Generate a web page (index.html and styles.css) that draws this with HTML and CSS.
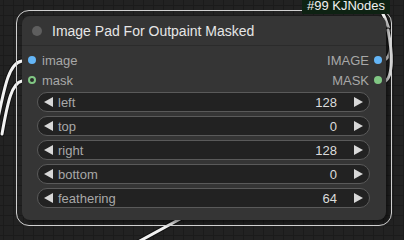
FILE: index.html
```html
<!DOCTYPE html>
<html lang="en">
<head>
    <meta charset="UTF-8">
    <title>Image Pad For Outpaint Masked</title>
    <link rel="stylesheet" href="styles.css">
</head>
<body>
    <div class="canvas">
        <!-- links drawn behind the node -->
        <svg class="links" width="404" height="240" viewBox="0 0 404 240">
            <g fill="none" stroke-linecap="round">
                <path class="link-shadow" d="M22 61 C 8 63, 4 90, -4 128"/>
                <path class="link" d="M22 61 C 8 63, 4 90, -4 128"/>
                <path class="link-shadow" d="M22 81 C 12 83, 8 100, 2 134"/>
                <path class="link" d="M22 81 C 12 83, 8 100, 2 134"/>
                <path class="link-shadow" d="M384 60 C 394 56, 392 30, 382 12"/>
                <path class="link" d="M384 60 C 394 56, 392 30, 382 12"/>
                <path class="link-shadow" d="M384 82 C 394 78, 392 50, 388 30"/>
                <path class="link" d="M384 82 C 394 78, 392 50, 388 30"/>
                <path class="link-shadow" d="M138 242 L 180 219"/>
                <path class="link" d="M138 242 L 180 219"/>
            </g>
        </svg>

        <div class="node selected">
            <div class="node-title">
                <span class="title-dot"></span>
                <span class="title-text">Image Pad For Outpaint Masked</span>
            </div>

            <div class="slots">
                <div class="slot-row">
                    <div class="slot in"><span class="dot dot-image"></span>image</div>
                    <div class="slot out">IMAGE<span class="dot dot-image"></span></div>
                </div>
                <div class="slot-row">
                    <div class="slot in"><span class="dot dot-mask-ring"></span>mask</div>
                    <div class="slot out">MASK<span class="dot dot-mask"></span></div>
                </div>
            </div>

            <div class="widgets">
                <div class="widget">
                    <span class="arrow left"></span>
                    <span class="w-label">left</span>
                    <span class="w-value">128</span>
                    <span class="arrow right"></span>
                </div>
                <div class="widget">
                    <span class="arrow left"></span>
                    <span class="w-label">top</span>
                    <span class="w-value">0</span>
                    <span class="arrow right"></span>
                </div>
                <div class="widget">
                    <span class="arrow left"></span>
                    <span class="w-label">right</span>
                    <span class="w-value">128</span>
                    <span class="arrow right"></span>
                </div>
                <div class="widget">
                    <span class="arrow left"></span>
                    <span class="w-label">bottom</span>
                    <span class="w-value">0</span>
                    <span class="arrow right"></span>
                </div>
                <div class="widget">
                    <span class="arrow left"></span>
                    <span class="w-label">feathering</span>
                    <span class="w-value">64</span>
                    <span class="arrow right"></span>
                </div>
            </div>
        </div>

        <div class="badge">#99 KJNodes</div>
    </div>
</body>
</html>
```

FILE: styles.css
```css
body {
    margin: 0;
    background-color: #222;
    font-family: "Liberation Sans", Arial, sans-serif;
    overflow: hidden;
}

.canvas {
    position: relative;
    width: 404px;
    height: 240px;
    background-color: #222;
    background-image:
        linear-gradient(to right, #1b1b1b 1px, transparent 1px),
        linear-gradient(to bottom, #1b1b1b 1px, transparent 1px);
    background-size: 10px 10px;
    background-position: 3px 5px;
}

.links {
    position: absolute;
    left: 0;
    top: 0;
}

.link-shadow {
    stroke: #111;
    stroke-width: 5;
}

.link {
    stroke: #f2f2f2;
    stroke-width: 3;
}

/* node sits on the free canvas */
.node {
    position: absolute;
    left: 22px;
    top: 16px;
    width: 364px;
    height: 204px;
    background: #353535;
    border-radius: 8px;
    box-shadow: 3px 3px 4px rgba(0, 0, 0, 0.45);
    box-sizing: border-box;
}

.node.selected::before {
    content: "";
    position: absolute;
    left: -6px;
    top: -6px;
    right: -6px;
    bottom: -6px;
    border: 1px solid #d0d0d0;
    border-radius: 13px;
    pointer-events: none;
}

.node-title {
    display: flex;
    align-items: center;
    height: 30px;
    padding-left: 10px;
    border-bottom: 1px solid #2b2b2b;
    box-sizing: border-box;
}

.title-dot {
    width: 10px;
    height: 10px;
    border-radius: 50%;
    background: #5e5e5e;
    margin-right: 10px;
}

.title-text {
    color: #e6e6e6;
    font-size: 14px;
}

.slots {
    padding-top: 4px;
}

.slot-row {
    display: flex;
    justify-content: space-between;
    align-items: center;
    height: 20px;
}

.slot {
    display: flex;
    align-items: center;
    color: #a8a8a8;
    font-size: 13px;
}

.slot.in {
    padding-left: 6px;
}

.slot.in .dot {
    margin-right: 6px;
}

.slot.out {
    padding-right: 4px;
}

.slot.out .dot {
    margin-left: 5px;
}

.dot {
    width: 8px;
    height: 8px;
    border-radius: 50%;
    box-sizing: border-box;
}

.dot-image {
    background: #64b5f6;
}

.dot-mask {
    background: #81c784;
}

.dot-mask-ring {
    border: 2px solid #81c784;
    background: #2a2a2a;
}

.widgets {
    display: flex;
    flex-direction: column;
    gap: 4px;
    margin: 2px 16px 0 15px;
}

.widget {
    display: flex;
    align-items: center;
    height: 20px;
    background: #222;
    border: 1px solid #5a5a5a;
    border-radius: 10px;
    box-sizing: border-box;
    padding: 0 6px 0 6px;
    font-size: 13px;
}

.arrow {
    width: 0;
    height: 0;
    border-top: 5px solid transparent;
    border-bottom: 5px solid transparent;
}

.arrow.left {
    border-right: 9px solid #d8d8d8;
    margin-right: 5px;
}

.arrow.right {
    border-left: 9px solid #d8d8d8;
    margin-left: 17px;
}

.w-label {
    flex: 1;
    color: #a8a8a8;
}

.w-value {
    color: #dcdcdc;
}

.badge {
    position: absolute;
    left: 302px;
    top: -2px;
    padding: 0 5px;
    height: 16px;
    line-height: 16px;
    background: #0e2213;
    color: #f0f0f0;
    font-size: 13px;
}
```
